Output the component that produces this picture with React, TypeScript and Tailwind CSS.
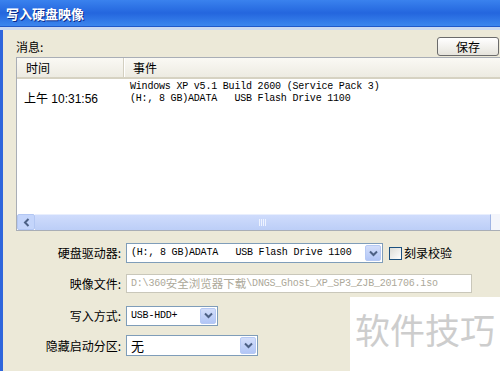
import React from "react";

const cjk = { fontFamily: '"Noto Sans CJK SC", "Liberation Sans", sans-serif' };
const mono = { fontFamily: '"Liberation Mono", "Noto Sans CJK SC", monospace' };

function Chevron() {
  return (
    <svg width="9" height="7" viewBox="0 0 9 7">
      <path d="M1 1.5 L4.5 5 L8 1.5" fill="none" stroke="#4D6185" strokeWidth="2" />
    </svg>
  );
}

function ArrowBtn() {
  return (
    <div className="w-[16px] self-stretch m-[1px] rounded-[2px] border border-[#B6C9F4] bg-linear-to-b from-[#D3DEFA] to-[#B2C6F6] flex items-center justify-center">
      <Chevron />
    </div>
  );
}

export default function App() {
  return (
    <div className="w-[500px] h-[371px] relative overflow-hidden flex flex-col bg-[#ECE9D8]" style={cjk}>
      {/* Title bar */}
      <div className="h-[26px] shrink-0 bg-linear-to-b from-[#3A82EE] via-[#2466DE] to-[#3C86EE] flex items-center pl-[6px]">
        <span className="text-white text-[13px] font-bold leading-none [text-shadow:1px_1px_#0B2A8A]" style={cjk}>
          写入硬盘映像
        </span>
      </div>
      <div className="h-[1px] shrink-0 bg-[#2159C9]" />
      <div className="h-[3px] shrink-0 bg-[#CCD9F0]" />

      {/* Body */}
      <div className="flex-1 flex flex-col border-l-[3px] border-[#2F66DC] pl-[13px] pt-[7px]">
        {/* Message label + save */}
        <div className="h-[20px] flex items-end justify-between pr-[1px]">
          <span className="text-[12px] leading-[16px] text-black mb-[2px]">消息:</span>
          <div className="w-[62px] h-[19px] mb-[1px] rounded-[3px] border border-[#6B6B6B] bg-linear-to-b from-[#FFFFFF] to-[#E6E4DC] flex items-center justify-center text-[12px] leading-none text-black">
            保存
          </div>
        </div>

        {/* List view */}
        <div className="h-[174px] flex flex-col border-l border-t border-b border-[#A9AEB6] bg-white">
          <div className="h-[21px] shrink-0 flex bg-linear-to-b from-[#FAF9F4] to-[#EDEBE2] border-b-[2px] border-[#D6D2C2] text-[12px] leading-none text-black">
            <div className="w-[107px] flex items-center pl-[9px] border-r border-[#D3CFC0]">时间</div>
            <div className="flex items-center pl-[8px] border-l border-white">事件</div>
          </div>
          <div className="flex-1 flex pt-[2px]">
            <div className="w-[113px] pl-[7px] pt-[12px] text-[12px] leading-[12px] text-black" style={{ fontFamily: '"Liberation Sans", "Noto Sans CJK SC", sans-serif' }}>
              上午 10:31:56
            </div>
            <div className="text-[10px] leading-[12px] tracking-[-0.2px] text-black whitespace-pre" style={mono}>
              <div>Windows XP v5.1 Build 2600 (Service Pack 3)</div>
              <div>(H:, 8 GB)ADATA   USB Flash Drive 1100</div>
            </div>
          </div>
          <div className="h-[16px] shrink-0 flex">
            <div className="w-[18px] bg-[#C4D5FB] border border-[#B3C7F3] rounded-[2px] flex items-center justify-center">
              <svg width="7" height="9" viewBox="0 0 7 9">
                <path d="M5.5 1 L2 4.5 L5.5 8" fill="none" stroke="#4D6185" strokeWidth="2" />
              </svg>
            </div>
            <div className="flex-1 bg-linear-to-b from-[#CFDCFC] to-[#BCCEF7] border-t border-[#E8EEFD] border-r border-r-[#9FB4E4] flex items-center justify-center">
              <div className="flex gap-[1px]">
                <div className="w-[1px] h-[7px] bg-[#EEF3FF]" />
                <div className="w-[1px] h-[7px] bg-[#EEF3FF]" />
                <div className="w-[1px] h-[7px] bg-[#EEF3FF]" />
                <div className="w-[1px] h-[7px] bg-[#EEF3FF]" />
              </div>
            </div>
            <div className="w-[9px] bg-[#F3F5FB]" />
          </div>
        </div>

        {/* Form */}
        <div className="mt-[12px] h-[20px] flex items-center">
          <div className="w-[110px] text-right pr-[5px] text-[12px] leading-none text-black">硬盘驱动器:</div>
          <div className="w-[257px] h-[20px] flex items-center border border-[#7F9DB9] bg-white">
            <div className="flex-1 pl-[4px] text-[10px] tracking-[-0.2px] leading-none text-black whitespace-pre" style={mono}>
              (H:, 8 GB)ADATA   USB Flash Drive 1100
            </div>
            <ArrowBtn />
          </div>
          <div className="ml-[6px] w-[13px] h-[13px] border border-[#1C5180] bg-linear-to-br from-[#DCDCD7] to-white" />
          <div className="ml-[2px] text-[12px] leading-none text-black">刻录校验</div>
        </div>

        <div className="mt-[11px] h-[19px] flex items-center">
          <div className="w-[110px] text-right pr-[5px] text-[12px] leading-none text-black">映像文件:</div>
          <div className="w-[346px] h-[19px] flex items-center border border-[#C9C7BA] bg-white pl-[4px] text-[10px] tracking-[-0.2px] leading-none text-[#ACA899] whitespace-pre" style={mono}>
            D:\360<span className="text-[11.5px] tracking-normal" style={cjk}>安全浏览器下载</span>\DNGS_Ghost_XP_SP3_ZJB_201706.iso
          </div>
        </div>

        <div className="mt-[13px] h-[19px] flex items-center">
          <div className="w-[110px] text-right pr-[5px] text-[12px] leading-none text-black">写入方式:</div>
          <div className="w-[92px] h-[20px] flex items-center border border-[#7F9DB9] bg-white">
            <div className="flex-1 pl-[4px] text-[10px] tracking-[-0.2px] leading-none text-black" style={mono}>
              USB-HDD+
            </div>
            <ArrowBtn />
          </div>
        </div>

        <div className="mt-[10px] h-[21px] flex items-center">
          <div className="w-[110px] text-right pr-[5px] text-[12px] leading-none text-black">隐藏启动分区:</div>
          <div className="w-[132px] h-[21px] flex items-center border border-[#7F9DB9] bg-white">
            <div className="flex-1 pl-[4px] text-[13px] leading-none text-black">无</div>
            <ArrowBtn />
          </div>
        </div>
      </div>

      {/* Watermark */}
      <div className="absolute left-[350px] top-[297px] right-0 bottom-0 bg-white flex items-start pl-[5px] pt-[14px]">
        <span className="text-[35px] leading-none text-[#CDCDCD]" style={cjk}>软件技巧</span>
      </div>
    </div>
  );
}
